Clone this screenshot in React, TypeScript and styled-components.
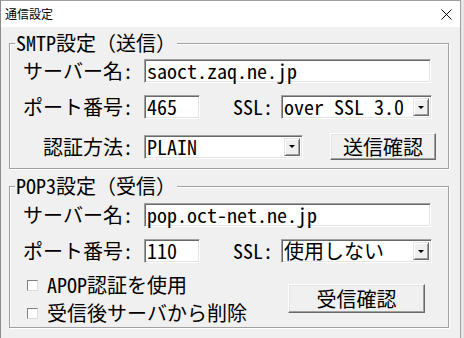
import styled, { createGlobalStyle } from 'styled-components';

const FONT = `"Noto Sans Mono CJK JP", "Noto Sans CJK JP", "Liberation Mono", monospace`;

const Global = createGlobalStyle`
  html, body {
    margin: 0;
    padding: 0;
    background: #e6e6e6;
  }
  * {
    box-sizing: border-box;
  }
`;

const Window = styled.div`
  width: 461px;
  height: 338px;
  display: flex;
  flex-direction: column;
  background: #f0f0f0;
  border-left: 1px solid #8c8c8c;
  border-right: 1px solid #a0a0a0;
  border-top: 1px solid #a0a0a0;
  font-family: ${FONT};
  font-size: 20px;
  line-height: 24px;
  color: #000;
`;

const TitleBar = styled.div`
  height: 26px;
  background: #fff;
  display: flex;
  align-items: center;
  justify-content: space-between;
  padding: 0 8px 0 4px;
  font-family: "Noto Sans CJK JP", sans-serif;
  font-size: 12px;
  line-height: 16px;
`;

const Body = styled.div`
  display: flex;
  flex-direction: column;
  padding: 16px 0 0 8px;
`;

const Group = styled.div<{ $h: number; $mt?: number }>`
  width: 440px;
  height: ${(p) => p.$h}px;
  margin-top: ${(p) => p.$mt ?? 0}px;
  border: 1px solid #a0a0a0;
  box-shadow: inset 1px 1px 0 #fff, 1px 1px 0 #fff;
  display: flex;
  flex-direction: column;
`;

const Legend = styled.div`
  align-self: flex-start;
  margin: -13px 0 3px 5px;
  padding: 0 1px;
  height: 24px;
  background: #f0f0f0;
`;

const Row = styled.div<{ $mt: number; $h?: number }>`
  display: flex;
  align-items: center;
  margin-top: ${(p) => p.$mt}px;
  height: ${(p) => p.$h ?? 24}px;
`;

const Label = styled.div`
  width: 123px;
  margin-right: 11px;
  text-align: right;
  white-space: nowrap;
`;

const InlineLabel = styled.div<{ $ml: number }>`
  margin-left: ${(p) => p.$ml}px;
  margin-right: 8px;
  white-space: nowrap;
`;

const Field = styled.div<{ $w: number }>`
  width: ${(p) => p.$w}px;
  height: 24px;
  background: #fff;
  border-top: 1px solid #a0a0a0;
  border-left: 1px solid #a0a0a0;
  border-right: 1px solid #fff;
  border-bottom: 1px solid #fff;
  box-shadow: inset 1px 1px 0 #696969, inset -1px -1px 0 #e3e3e3;
  padding: 0 0 0 2px;
  line-height: 22px;
  white-space: nowrap;
  display: flex;
  align-items: center;
`;

const SelectBox = styled(Field)`
  justify-content: space-between;
  padding-right: 2px;
`;

const Arrow = styled.div`
  width: 16px;
  height: 18px;
  background: #f0f0f0;
  border-top: 1px solid #e3e3e3;
  border-left: 1px solid #e3e3e3;
  border-right: 1px solid #696969;
  border-bottom: 1px solid #696969;
  box-shadow: inset 1px 1px 0 #fff, inset -1px -1px 0 #a0a0a0;
  display: flex;
  align-items: center;
  justify-content: center;
  &::after {
    content: '';
    border-left: 3px solid transparent;
    border-right: 3px solid transparent;
    border-top: 3px solid #000;
  }
`;

const Button = styled.div<{ $w: number; $h: number; $ml?: string; $mt?: number; $mr?: number }>`
  width: ${(p) => p.$w}px;
  height: ${(p) => p.$h}px;
  margin-left: ${(p) => p.$ml ?? '0'};
  margin-top: ${(p) => p.$mt ?? 0}px;
  margin-right: ${(p) => p.$mr ?? 0}px;
  align-self: flex-start;
  background: #f0f0f0;
  border-top: 1px solid #fff;
  border-left: 1px solid #fff;
  border-right: 1px solid #696969;
  border-bottom: 1px solid #696969;
  box-shadow: inset -1px -1px 0 #a0a0a0, inset 1px 1px 0 #e3e3e3;
  display: flex;
  align-items: center;
  justify-content: center;
`;

const Bottom = styled.div`
  display: flex;
  margin-top: 8px;
`;

const Checks = styled.div`
  display: flex;
  flex-direction: column;
  padding-left: 17px;
`;

const CheckRow = styled.div`
  height: 28px;
  display: flex;
  align-items: center;
  gap: 9px;
  white-space: nowrap;
`;

const Box = styled.div`
  width: 11px;
  height: 11px;
  background: #fff;
  border-top: 1px solid #808080;
  border-left: 1px solid #808080;
  border-right: 1px solid #dcdcdc;
  border-bottom: 1px solid #dcdcdc;
`;

function Select({ w, value }: { w: number; value: string }) {
  return (
    <SelectBox $w={w}>
      <span>{value}</span>
      <Arrow />
    </SelectBox>
  );
}

export default function App() {
  return (
    <>
      <Global />
      <Window>
        <TitleBar>
          <span>通信設定</span>
          <svg width="11" height="11" viewBox="0 0 11 11">
            <path d="M0.5 0.5 L10.5 10.5 M10.5 0.5 L0.5 10.5" stroke="#000" strokeWidth="1" />
          </svg>
        </TitleBar>
        <Body>
          <Group $h={126}>
            <Legend>SMTP設定（送信）</Legend>
            <Row $mt={1}>
              <Label>サーバー名:</Label>
              <Field $w={287}>saoct.zaq.ne.jp</Field>
            </Row>
            <Row $mt={12}>
              <Label>ポート番号:</Label>
              <Field $w={56}>465</Field>
              <InlineLabel $ml={33}>SSL:</InlineLabel>
              <Select w={151} value="over SSL 3.0" />
            </Row>
            <Row $mt={14} $h={27}>
              <Label>認証方法:</Label>
              <Select w={159} value="PLAIN" />
              <Button $w={106} $h={27} $ml="27px">送信確認</Button>
            </Row>
          </Group>
          <Group $h={142} $mt={17}>
            <Legend>POP3設定（受信）</Legend>
            <Row $mt={2}>
              <Label>サーバー名:</Label>
              <Field $w={287}>pop.oct-net.ne.jp</Field>
            </Row>
            <Row $mt={12}>
              <Label>ポート番号:</Label>
              <Field $w={56}>110</Field>
              <InlineLabel $ml={33}>SSL:</InlineLabel>
              <Select w={151} value="使用しない" />
            </Row>
            <Bottom>
              <Checks>
                <CheckRow>
                  <Box />
                  <span>APOP認証を使用</span>
                </CheckRow>
                <CheckRow>
                  <Box />
                  <span>受信後サーバから削除</span>
                </CheckRow>
              </Checks>
              <Button $w={137} $h={29} $mt={13} $ml="auto" $mr={23}>受信確認</Button>
            </Bottom>
          </Group>
        </Body>
      </Window>
    </>
  );
}
